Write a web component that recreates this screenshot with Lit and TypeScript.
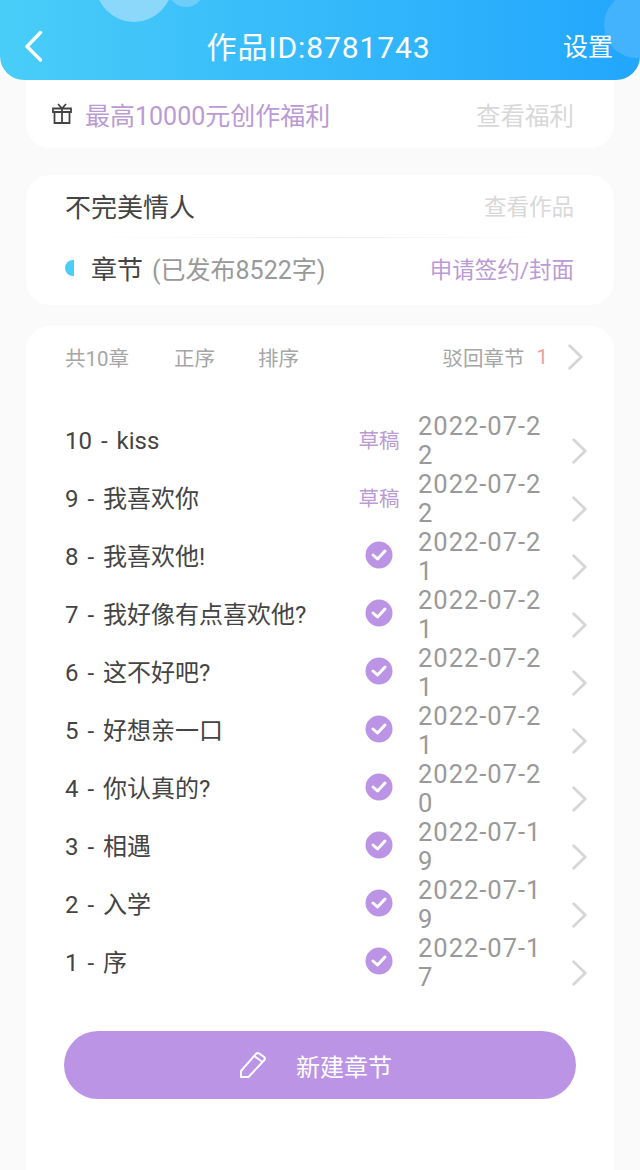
import { LitElement, html, css, svg } from "lit";
import { customElement } from "lit/decorators.js";

const rows = [
  ["10 - kiss", "draft", "2022-07-22"],
  ["9 - 我喜欢你", "draft", "2022-07-22"],
  ["8 - 我喜欢他!", "ok", "2022-07-21"],
  ["7 - 我好像有点喜欢他?", "ok", "2022-07-21"],
  ["6 - 这不好吧?", "ok", "2022-07-21"],
  ["5 - 好想亲一口", "ok", "2022-07-21"],
  ["4 - 你认真的?", "ok", "2022-07-20"],
  ["3 - 相遇", "ok", "2022-07-19"],
  ["2 - 入学", "ok", "2022-07-19"],
  ["1 - 序", "ok", "2022-07-17"],
];

const chevron = svg`<path d="M1.7 1.7 L13.2 13 L1.7 24.3" fill="none" stroke="#d6d6d6" stroke-width="2.8" stroke-linecap="round" stroke-linejoin="round"/>`;

@customElement("app-root")
export class AppRoot extends LitElement {
  static styles = css`
    :host {
      display: block;
      width: 640px;
      height: 1170px;
      overflow: hidden;
      background: #fafafa;
      font-family: "Roboto", "Noto Sans CJK SC", sans-serif;
      color: #444;
    }
    .header {
      position: relative;
      height: 80px;
      box-sizing: border-box;
      padding: 16px 27px 0 24px;
      display: grid;
      grid-template-columns: 1fr auto 1fr;
      align-items: center;
      border-radius: 0 0 24px 24px;
      background: linear-gradient(90deg, #49cdf8 0%, #22a6fd 100%);
      color: #fff;
      overflow: hidden;
    }
    .bubble { position: absolute; border-radius: 50%; }
    .b1 { left: 95px; top: -58px; width: 78px; height: 80px; background: #8bd8fb; }
    .b2 { left: 168px; top: -29px; width: 36px; height: 36px; background: #6fcdfa; }
    .b3 { left: 604px; top: -8px; width: 66px; height: 66px; background: #43b3fd; }
    .back, .title, .set { position: relative; }
    .back { width: 20px; height: 32px; display: block; margin-top: -4px; }
    .title { font-size: 30px; line-height: 40px; letter-spacing: 0.9px; font-weight: 400; }
    .set { font-size: 25px; line-height: 34px; justify-self: end; }
    .page { padding: 0 26px; display: flex; flex-direction: column; }
    .card { background: #fff; border-radius: 24px; }
    .gift {
      height: 68px;
      border-radius: 0 0 24px 24px;
      padding: 0 40px 0 26px;
      display: flex;
      align-items: center;
      font-size: 25px;
      color: #bb9ad6;
    }
    .gift svg { width: 20px; height: 24px; margin-right: 13px; flex: none; }
    .gift .more { margin-left: auto; color: #d8d8d8; font-size: 24.5px; }
    .work { margin-top: 27px; height: 130px; padding: 0 40px 0 39px; box-sizing: border-box; display: flex; flex-direction: column; }
    .line1 { height: 60px; margin-bottom: 2px; display: flex; align-items: center; justify-content: space-between; font-size: 26px; color: #444; }
    .line1 .more { font-size: 22.5px; color: #d8d8d8; }
    .sep { height: 1px; margin: 0 20px; background: linear-gradient(90deg, #fff, #eee 50%, #fff); }
    .line2 { flex: 1; display: flex; align-items: center; font-size: 25px; color: #999; padding-bottom: 8px; }
    .half { width: 9px; height: 16px; background: #4ccdf8; border-radius: 9px 0 0 9px; margin-right: 17px; flex: none; }
    .line2 b { font-weight: 400; font-size: 26px; color: #444; margin-right: 9px; }
    .line2 .apply { margin-left: auto; font-size: 22.5px; color: #bb9ad6; }
    .list { margin-top: 21px; height: 900px; padding: 0 28px 0 39px; box-sizing: border-box; border-radius: 24px 24px 0 0; }
    .tools { height: 62px; display: flex; align-items: center; font-size: 20.5px; color: #a6a6a6; padding-right: 3px; }
    .tools span { margin-right: 45px; }
    .tools span + span { margin-right: 43px; }
    .tools .rej { margin-left: auto; margin-right: 0; color: #a6a6a6; }
    .tools .num { margin: 0 20px 0 12px; color: #e8a0a0; }
    .tools svg, .row svg.ch { width: 15px; height: 26px; flex: none; }
    .rows { margin-top: 24px; }
    .row { height: 58px; display: flex; align-items: center; }
    .name { width: 275px; flex: none; font-size: 24px; line-height: 30px; word-spacing: 3px; color: #444; white-space: nowrap; }
    .status { width: 78px; flex: none; display: flex; justify-content: center; margin-top: -4px; font-size: 20.5px; color: #bb9ad6; }
    .status svg { width: 28px; height: 28px; display: block; }
    .date { width: 128px; flex: none; font-size: 25.5px; letter-spacing: 1px; line-height: 29px; color: #999; word-break: break-all; }
    .row svg.ch { margin-left: 26px; margin-top: 20px; }
    .btnwrap { margin-top: 39px; padding-right: 10px; margin-left: -1px; }
    .btn {
      height: 68px;
      border-radius: 34px;
      background: #bc94e5;
      color: #fff;
      display: flex;
      align-items: center;
      justify-content: center;
      font-size: 24px;
      padding-right: 8px;
    }
    .btn svg { width: 26px; height: 26px; margin-right: 30px; }
    .btn span { margin-top: 1px; }
  `;

  render() {
    return html`
      <div class="header">
        <div class="bubble b1"></div>
        <div class="bubble b2"></div>
        <div class="bubble b3"></div>
        <svg class="back" viewBox="0 0 20 32"><path d="M16.5 2.5 L3 16.5 L16.5 30" fill="none" stroke="#fff" stroke-width="3.4" stroke-linecap="round" stroke-linejoin="round"/></svg>
        <div class="title">作品ID:8781743</div>
        <div class="set">设置</div>
      </div>
      <div class="page">
        <div class="card gift">
          <svg viewBox="0 0 20 24" fill="none" stroke="#444" stroke-width="1.8">
            <path d="M2.5 10 H17.5 V21 H2.5 Z M1 6.5 H19 V10 H1 Z M10 6.5 V21 M6 2 L10 6.5 L14 2"/>
          </svg>
          <span>最高10000元创作福利</span>
          <span class="more">查看福利</span>
        </div>
        <div class="card work">
          <div class="line1"><span>不完美情人</span><span class="more">查看作品</span></div>
          <div class="sep"></div>
          <div class="line2">
            <i class="half"></i>
            <b>章节</b><span>(已发布8522字)</span>
            <span class="apply">申请签约/封面</span>
          </div>
        </div>
        <div class="card list">
          <div class="tools">
            <span>共10章</span><span>正序</span><span>排序</span>
            <span class="rej">驳回章节</span><span class="num">1</span>
            <svg viewBox="0 0 15 26">${chevron}</svg>
          </div>
          <div class="rows">
            ${rows.map(
              ([n, s, d]) => html`
                <div class="row">
                  <div class="name">${n}</div>
                  <div class="status">
                    ${s === "draft"
                      ? html`草稿`
                      : html`<svg viewBox="0 0 28 28"><circle cx="14" cy="14" r="13.5" fill="#bc94e5"/><path d="M8 14 L12.5 18 L20 10" fill="none" stroke="#fff" stroke-width="3" stroke-linecap="round" stroke-linejoin="round"/></svg>`}
                  </div>
                  <div class="date">${d}</div>
                  <svg class="ch" viewBox="0 0 15 26">${chevron}</svg>
                </div>
              `
            )}
          </div>
          <div class="btnwrap">
            <div class="btn">
              <svg viewBox="0 0 26 26" fill="none" stroke="#fff" stroke-width="2" stroke-linejoin="round">
                <path d="M1 25 V19 L16 1.8 Q17.5 0.6 19 1.4 L24.2 5 Q25.4 6.4 24.4 8 L8.5 25 Z M15 4.5 L22.5 10"/>
              </svg>
              <span>新建章节</span>
            </div>
          </div>
        </div>
      </div>
    `;
  }
}
